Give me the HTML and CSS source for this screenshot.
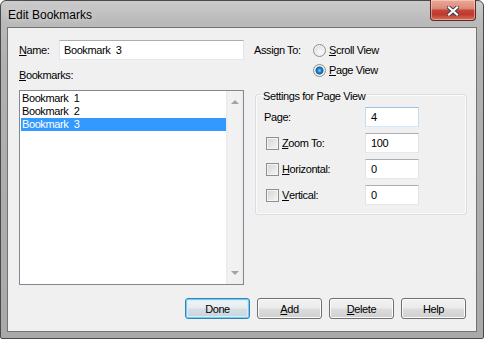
FILE: index.html
```html
<!DOCTYPE html>
<html lang="en">
<head>
    <meta charset="UTF-8">
    <title>Edit Bookmarks</title>
    <link rel="stylesheet" href="styles.css">
</head>
<body>
    <div class="window">
        <div class="titlebar">
            <span class="title">Edit Bookmarks</span>
            <div class="close">
                <svg width="12" height="10" viewBox="0 0 12 10">
                    <path d="M2 1.5 L10 8.5 M10 1.5 L2 8.5" stroke="#3b3f4a" stroke-width="4" stroke-linecap="square"/>
                    <path d="M2 1.5 L10 8.5 M10 1.5 L2 8.5" stroke="#ffffff" stroke-width="2.2" stroke-linecap="square"/>
                </svg>
            </div>
        </div>

        <div class="client">
            <div class="main">
                <div class="left">
                    <div class="name-row">
                        <span class="name-label"><u>N</u>ame:</span>
                        <div class="textbox name-box">Bookmark&nbsp; 3</div>
                    </div>
                    <div class="list-label"><u>B</u>ookmarks:</div>
                    <div class="listbox">
                        <div class="items">
                            <div class="item">Bookmark&nbsp; 1</div>
                            <div class="item">Bookmark&nbsp; 2</div>
                            <div class="item selected">Bookmark&nbsp; 3</div>
                        </div>
                        <div class="scrollbar">
                            <span class="arrow up"></span>
                            <span class="arrow down"></span>
                        </div>
                    </div>
                </div>

                <div class="right">
                    <div class="assign">
                        <span class="assign-label">Assign To:</span>
                        <div class="radios">
                            <div class="radio-row"><span class="radio"></span><span><u>S</u>croll View</span></div>
                            <div class="radio-row"><span class="radio checked"></span><span><u>P</u>age View</span></div>
                        </div>
                    </div>

                    <fieldset class="group">
                        <legend>Settings for Page View</legend>
                        <div class="setting">
                            <span class="setting-label">Pa<u>g</u>e:</span>
                            <div class="textbox small focused">4</div>
                        </div>
                        <div class="setting">
                            <span class="setting-label"><span class="check"></span><u>Z</u>oom To:</span>
                            <div class="textbox small">100</div>
                        </div>
                        <div class="setting">
                            <span class="setting-label"><span class="check"></span><u>H</u>orizontal:</span>
                            <div class="textbox small">0</div>
                        </div>
                        <div class="setting">
                            <span class="setting-label"><span class="check"></span><u>V</u>ertical:</span>
                            <div class="textbox small">0</div>
                        </div>
                    </fieldset>
                </div>
            </div>

            <div class="buttons">
                <button class="btn default">Done</button>
                <button class="btn"><u>A</u>dd</button>
                <button class="btn"><u>D</u>elete</button>
                <button class="btn">Help</button>
            </div>
        </div>
    </div>
</body>
</html>
```

FILE: styles.css
```css
body {
    margin: 0;
    padding: 0;
    width: 484px;
    height: 339px;
    overflow: hidden;
    font-family: "Liberation Sans", Arial, sans-serif;
    font-size: 11px;
    letter-spacing: -0.4px;
    color: #000;
}

u {
    text-decoration: underline;
    text-underline-offset: 1px;
}

.window {
    width: 484px;
    height: 339px;
    box-sizing: border-box;
    border: 1px solid #4a4a4a;
    border-radius: 6px 6px 2px 2px;
    background: linear-gradient(180deg, #cbcbcb 0px, #bababa 20px, #b1b1b1 60px, #a9a9a9 100%);
    display: flex;
    flex-direction: column;
}

.titlebar {
    height: 27px;
    display: flex;
    justify-content: space-between;
    align-items: flex-start;
}

.title {
    font-size: 12px;
    letter-spacing: 0;
    margin: 7px 0 0 7px;
    text-shadow: 0 0 6px rgba(255, 255, 255, 0.8);
}

.close {
    width: 44px;
    height: 18px;
    margin: -1px 7px 0 0;
    border: 1px solid #5a2a26;
    border-top: none;
    border-radius: 0 0 4px 4px;
    background: linear-gradient(180deg, #e9a898 0%, #dd8a78 42%, #c5463a 52%, #c0392c 72%, #d5705a 100%);
    box-shadow: inset 0 0 0 1px rgba(255, 220, 210, 0.5);
    display: flex;
    justify-content: center;
    align-items: center;
    padding-top: 2px;
}

.client {
    margin: 0 6px 6px 6px;
    height: 302px;
    border: 1px solid #737373;
    background-color: #f0f0f0;
    padding: 12px 9px 0 11px;
    display: flex;
    flex-direction: column;
}

.main {
    display: flex;
    gap: 10px;
}

.left {
    width: 225px;
    display: flex;
    flex-direction: column;
}

.name-row {
    display: flex;
    align-items: center;
    height: 20px;
}

.name-label {
    width: 40px;
}

.textbox {
    box-sizing: border-box;
    height: 20px;
    background-color: #fff;
    border: 1px solid #e2e3ea;
    border-top-color: #abadb3;
    border-bottom-color: #e3e9ef;
    display: flex;
    align-items: center;
}

.name-box {
    width: 185px;
    padding-left: 4px;
}

.list-label {
    margin-top: 9px;
    height: 13px;
    line-height: 13px;
    margin-bottom: 8px;
}

.listbox {
    height: 195px;
    box-sizing: border-box;
    border: 1px solid #828790;
    background-color: #fff;
    display: flex;
}

.items {
    flex: 1;
    padding: 1px 0 0 1px;
}

.item {
    height: 13px;
    line-height: 13px;
    padding-left: 1px;
}

.item.selected {
    background-color: #3399ff;
    color: #fff;
}

.scrollbar {
    width: 17px;
    background: linear-gradient(90deg, #e6e6e6 0px, #f2f2f2 2px, #f0f0f0 15px, #e8e8e8 17px);
    display: flex;
    flex-direction: column;
    justify-content: space-between;
    align-items: center;
    padding: 9px 0 9px 0;
}

.arrow {
    width: 0;
    height: 0;
    border-left: 4px solid transparent;
    border-right: 4px solid transparent;
}

.arrow.up {
    border-bottom: 4px solid #a3a3a3;
}

.arrow.down {
    border-top: 4px solid #a3a3a3;
}

.right {
    width: 213px;
    display: flex;
    flex-direction: column;
}

.assign {
    display: flex;
    align-items: flex-start;
}

.assign-label {
    width: 59px;
    line-height: 20px;
}

.radio-row {
    height: 20px;
    display: flex;
    align-items: center;
    gap: 3px;
}

.radio {
    width: 13px;
    height: 13px;
    box-sizing: border-box;
    border-radius: 50%;
    border: 1px solid #8e8f8f;
    background: radial-gradient(circle at 60% 65%, #fafafa 0%, #e4e4e4 60%, #cfcfcf 100%);
    box-shadow: inset 0 0 0 1px #f4f4f4;
}

.radio.checked {
    background: radial-gradient(circle at 50% 50%, #7fd1fa 0px, #1c8ad3 2px, #145d9c 3.5px, #e9e9e9 4.5px, #d6d6d6 100%);
}

.group {
    margin: 6px 0 0 1px;
    border: 1px solid #d5dfe5;
    border-radius: 3px;
    padding: 4px 8px 9px 8px;
    min-width: 0;
    box-shadow: inset 0 0 0 1px rgba(255, 255, 255, 0.7);
}

.group legend {
    margin-left: -3px;
    padding: 4px 2px 0 2px;
    line-height: 13px;
}

.setting {
    display: flex;
    align-items: center;
    height: 20px;
}

.setting + .setting {
    margin-top: 6px;
}

.setting-label {
    width: 101px;
    display: flex;
    align-items: center;
}

.check {
    width: 13px;
    height: 13px;
    box-sizing: border-box;
    margin: 0 3px 0 2px;
    border: 1px solid #8e8f8f;
    background: linear-gradient(135deg, #d3d3d3 0%, #e9e9e9 60%, #f7f7f7 100%);
    box-shadow: inset 0 0 0 1px #f4f4f4;
}

.textbox.small {
    width: 54px;
    padding-left: 5px;
}

.textbox.focused {
    border-color: #c4dcef;
    border-top-color: #9cc0e0;
    border-bottom-color: #d4e7f5;
}

.buttons {
    margin: 13px 1px 0 0;
    display: flex;
    justify-content: flex-end;
    gap: 7px;
}

.btn {
    width: 65px;
    height: 21px;
    padding: 0;
    font-family: "Liberation Sans", Arial, sans-serif;
    font-size: 11px;
    letter-spacing: -0.4px;
    color: #000;
    border: 1px solid #707070;
    border-radius: 3px;
    background: linear-gradient(180deg, #f2f2f2 0%, #ebebeb 48%, #dddddd 52%, #cfcfcf 100%);
    box-shadow: inset 0 0 0 1px #fbfbfb;
}

.btn.default {
    border-color: #3c7fb1;
    background: linear-gradient(180deg, #eef4f8 0%, #e6ecf0 48%, #d7dfe5 52%, #c9d3da 100%);
    box-shadow: inset 0 0 0 1px #6fd0f5, inset 0 0 0 2px #d6eef9;
}
```
